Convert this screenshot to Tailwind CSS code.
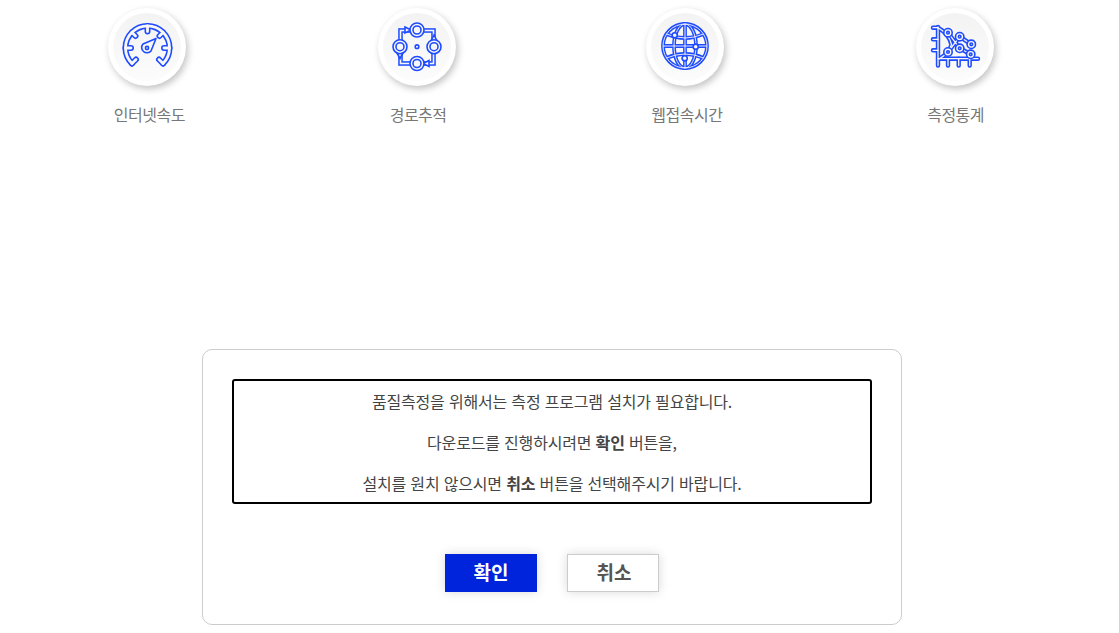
<!DOCTYPE html>
<html lang="ko">
<head>
<meta charset="utf-8">
<script src="https://cdn.jsdelivr.net/npm/@tailwindcss/browser@4"></script>
</head>
<body class="bg-white overflow-hidden font-['Noto_Sans_CJK_KR','Noto_Sans',sans-serif]">
<div class="w-[1119px] h-[633px] flex flex-col">
  <div class="grid grid-cols-4 w-[1075px] ml-[15px] pt-[8px] h-[349px] content-start">
    <div class="flex flex-col items-center">
      <div class="ml-[-5px] w-[78px] h-[78px] rounded-full bg-white flex items-center justify-center shadow-[2px_3px_7px_rgba(0,0,0,0.24)]">
        <div class="w-[68px] h-[68px] rounded-full bg-gradient-to-b from-[#f3f3f3] to-[#fcfcfc] flex items-center justify-center">
          <svg width="54" height="54" viewBox="0 0 54 54" fill="none" stroke-linejoin="round" stroke-linecap="round">
            <g stroke="#1f4bff" stroke-width="6">
              <path d="M12 43.500 A22 22 0 1 1 43 43.500"/>
              <path d="M12 43.500 L16 39.500 M43 43.500 L39 39.500"/>
              <path d="M27.500 6 V11.500 M5.500 28 H11 M49.500 28 H44 M12 12.500 L15.500 16 M43 12.500 L39.500 16"/>
            </g>
            <g stroke="#f7f7f7" stroke-width="2.800">
              <path d="M12 43.500 A22 22 0 1 1 43 43.500"/>
              <path d="M12 43.500 L16 39.500 M43 43.500 L39 39.500"/>
              <path d="M27.500 6 V11.500 M5.500 28 H11 M49.500 28 H44 M12 12.500 L15.500 16 M43 12.500 L39.500 16"/>
            </g>
            <g stroke="#1f4bff" stroke-width="1.600">
              <path d="M36 18.500 L31 31 A5 5 0 1 1 23 24 Z"/>
              <circle cx="27" cy="28" r="1.600"/>
            </g>
          </svg>
        </div>
      </div>
      <div class="mt-[16px] h-[24px] text-[16px] leading-[24px] tracking-[-0.5px] text-[#777]">인터넷속도</div>
    </div>
    <div class="flex flex-col items-center">
      <div class="ml-[-2px] w-[78px] h-[78px] rounded-full bg-white flex items-center justify-center shadow-[2px_3px_7px_rgba(0,0,0,0.24)]">
        <div class="w-[68px] h-[68px] rounded-full bg-gradient-to-b from-[#f3f3f3] to-[#fcfcfc] flex items-center justify-center">
          <svg width="54" height="54" viewBox="0 0 54 54" fill="none" stroke-linejoin="miter" stroke-linecap="butt">
            <rect x="10.500" y="10.500" width="33" height="33" stroke="#1f4bff" stroke-width="4.600"/>
            <rect x="10.500" y="10.500" width="33" height="33" stroke="#f7f7f7" stroke-width="1.600"/>
            <g stroke="#1f4bff" stroke-width="1.600" fill="#f7f7f7">
              <path d="M15 7 L21 10 L15 13 Z"/>
              <path d="M39 40.500 L33 43.500 L39 46.500 Z"/>
              <path d="M7 33 L10 38.500 L13 33 Z"/>
              <path d="M41 21 L44 15 L47 21 Z"/>
              <circle cx="27" cy="10" r="7"/><circle cx="27" cy="10" r="4"/>
              <circle cx="27" cy="43.500" r="7"/><circle cx="27" cy="43.500" r="4"/>
              <circle cx="10" cy="26.700" r="7"/><circle cx="10" cy="26.700" r="4"/>
              <circle cx="44" cy="26.700" r="7"/><circle cx="44" cy="26.700" r="4"/>
              <circle cx="27" cy="26.700" r="1.800"/>
            </g>
          </svg>
        </div>
      </div>
      <div class="mt-[16px] h-[24px] text-[16px] leading-[24px] tracking-[-0.5px] text-[#777]">경로추적</div>
    </div>
    <div class="flex flex-col items-center">
      <div class="ml-[-4px] w-[78px] h-[78px] rounded-full bg-white flex items-center justify-center shadow-[2px_3px_7px_rgba(0,0,0,0.24)]">
        <div class="w-[68px] h-[68px] rounded-full bg-gradient-to-b from-[#f3f3f3] to-[#fcfcfc] flex items-center justify-center">
          <svg width="54" height="54" viewBox="0 0 54 54" fill="none" stroke-linejoin="round" stroke-linecap="butt">
            <g stroke="#1f4bff" stroke-width="3.800">
              <circle cx="27" cy="26" r="22"/>
              <ellipse cx="27" cy="26" rx="11" ry="22"/>
              <path d="M27 4 V48"/>
              <path d="M8.500 14 Q27 22 45.500 14"/>
              <path d="M5 26 H49"/>
              <path d="M8.500 38 Q27 30 45.500 38"/>
            </g>
            <g stroke="#f7f7f7" stroke-width="0.900">
              <circle cx="27" cy="26" r="22"/>
              <ellipse cx="27" cy="26" rx="11" ry="22"/>
              <path d="M27 4 V48"/>
              <path d="M8.500 14 Q27 22 45.500 14"/>
              <path d="M5 26 H49"/>
              <path d="M8.500 38 Q27 30 45.500 38"/>
            </g>
            <g stroke="#1f4bff" stroke-width="1.600" fill="#f7f7f7">
              <circle cx="16.700" cy="15.300" r="2.600"/>
              <circle cx="37.700" cy="26.700" r="2.600"/>
              <circle cx="26.700" cy="38.300" r="2.600"/>
            </g>
          </svg>
        </div>
      </div>
      <div class="mt-[16px] h-[24px] text-[16px] leading-[24px] tracking-[-0.5px] text-[#777]">웹접속시간</div>
    </div>
    <div class="flex flex-col items-center">
      <div class="ml-[-1px] w-[78px] h-[78px] rounded-full bg-white flex items-center justify-center shadow-[2px_3px_7px_rgba(0,0,0,0.24)]">
        <div class="w-[68px] h-[68px] rounded-full bg-gradient-to-b from-[#f3f3f3] to-[#fcfcfc] flex items-center justify-center">
          <svg width="54" height="54" viewBox="0 0 54 54" fill="none" stroke-linejoin="round" stroke-linecap="round">
            <g stroke="#1f4bff" stroke-width="4.400">
              <path d="M10 7 V38.700 H50"/>
              <path d="M5 7.700 H10 M5 19.300 H10 M5 30.300 H10"/>
              <path d="M10 38.700 V45.500 M20 38.700 V45.500 M30.700 38.700 V45.500 M41.700 38.700 V45.500"/>
              <path d="M10 7.700 C18 12 22 18 23.500 24.500 C22 30 18 35 11.500 38.700"/>
              <path d="M20 12.700 L31.700 28.300 L42.700 34.300 M20 32 L31.700 16.700 L43.300 24.300"/>
            </g>
            <g stroke="#f7f7f7" stroke-width="1.300">
              <path d="M10 7 V38.700 H50"/>
              <path d="M5 7.700 H10 M5 19.300 H10 M5 30.300 H10"/>
              <path d="M10 38.700 V45.500 M20 38.700 V45.500 M30.700 38.700 V45.500 M41.700 38.700 V45.500"/>
              <path d="M10 7.700 C18 12 22 18 23.500 24.500 C22 30 18 35 11.500 38.700"/>
              <path d="M20 12.700 L31.700 28.300 L42.700 34.300 M20 32 L31.700 16.700 L43.300 24.300"/>
            </g>
            <g stroke="#1f4bff" stroke-width="1.600" fill="#f7f7f7">
              <circle cx="20" cy="12.700" r="4.200"/><circle cx="20" cy="12.700" r="1.300"/>
              <circle cx="31.700" cy="16.700" r="4.200"/><circle cx="31.700" cy="16.700" r="1.300"/>
              <circle cx="43.300" cy="24.300" r="4.200"/><circle cx="43.300" cy="24.300" r="1.300"/>
              <circle cx="20" cy="32" r="4.200"/><circle cx="20" cy="32" r="1.300"/>
              <circle cx="31.700" cy="28.300" r="4.200"/><circle cx="31.700" cy="28.300" r="1.300"/>
              <circle cx="42.700" cy="34.300" r="4.200"/><circle cx="42.700" cy="34.300" r="1.300"/>
            </g>
          </svg>
        </div>
      </div>
      <div class="mt-[16px] h-[24px] text-[16px] leading-[24px] tracking-[-0.5px] text-[#777]">측정통계</div>
    </div>
  </div>
  <div class="ml-[202px] w-[700px] h-[276px] border border-[#ccc] rounded-[10px] px-[29px] pt-[29px] flex flex-col items-center">
    <div class="w-[640px] h-[125px] border-2 border-black rounded-[3px] overflow-hidden text-center text-[16px] leading-[41px] tracking-[-0.18px] text-[#444] flex flex-col">
      <p>품질측정을 위해서는 측정 프로그램 설치가 필요합니다.</p>
      <p>다운로드를 진행하시려면 <b class="font-bold">확인</b> 버튼을,</p>
      <p>설치를 원치 않으시면 <b class="font-bold">취소</b> 버튼을 선택해주시기 바랍니다.</p>
    </div>
    <div class="mt-[50px] flex gap-[30px]">
      <div class="w-[92px] h-[38px] pb-[2px] bg-[#0024dc] text-white text-[19px] font-bold flex items-center justify-center shadow-[0_0_10px_rgba(0,0,0,0.15)]">확인</div>
      <div class="w-[92px] h-[38px] pb-[2px] pl-[2px] bg-white border border-[#ccc] text-[#555] text-[19px] font-bold flex items-center justify-center shadow-[0_0_10px_rgba(0,0,0,0.15)]">취소</div>
    </div>
  </div>
</div>
</body>
</html>
